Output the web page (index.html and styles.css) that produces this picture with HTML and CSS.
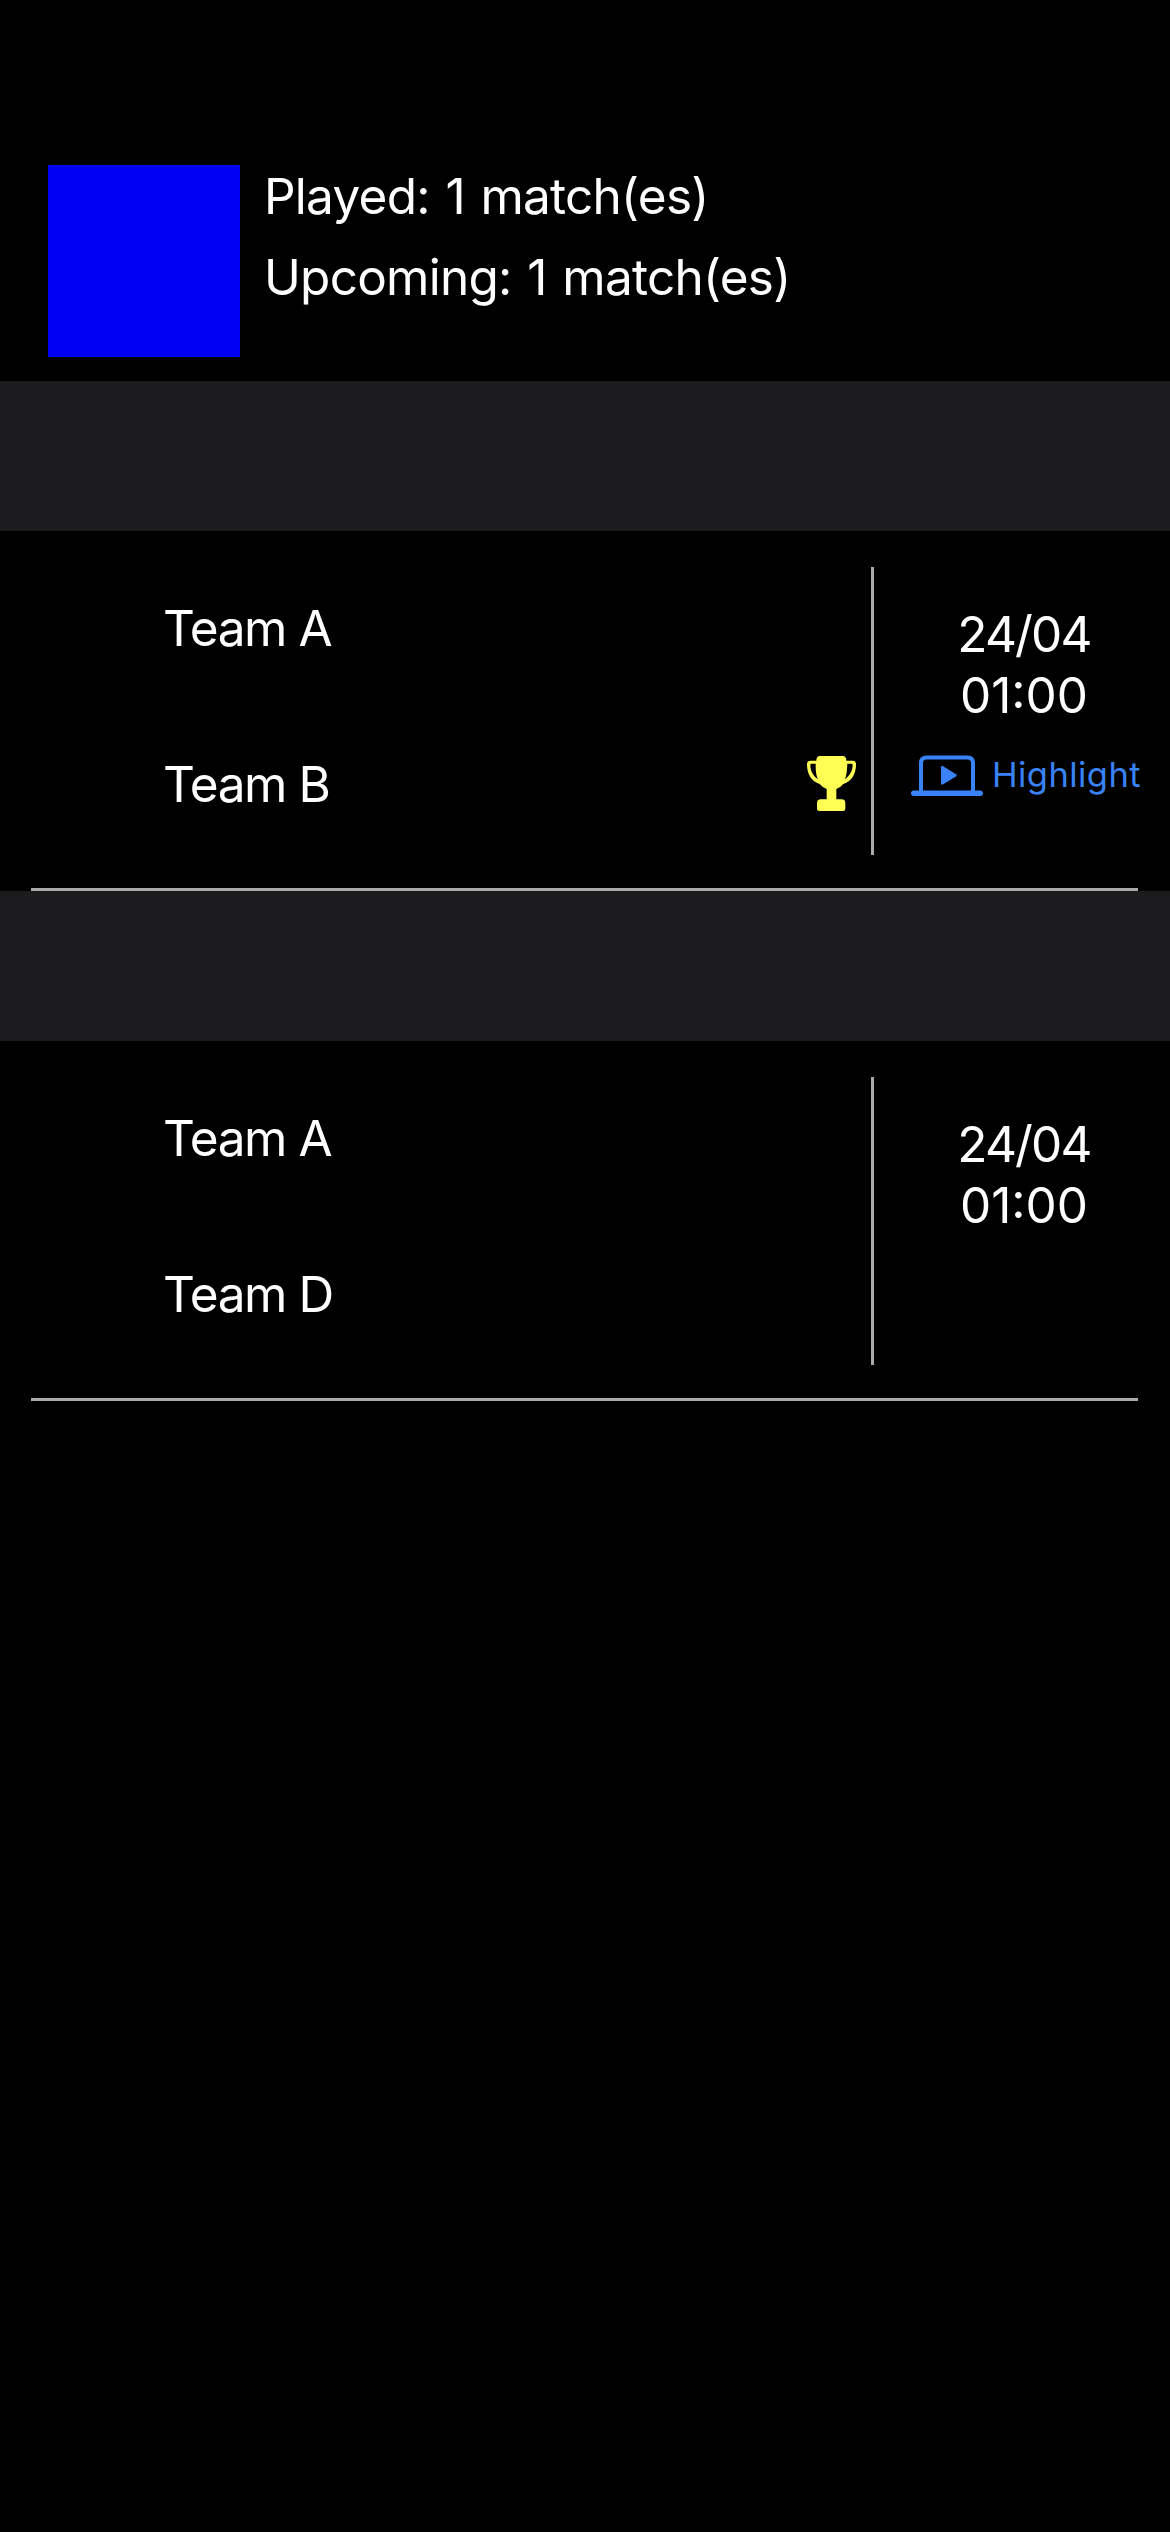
FILE: index.html
```html
<!DOCTYPE html>
<html lang="en">
<head>
<meta charset="utf-8">
<title>Matches</title>
<link rel="stylesheet" href="styles.css">
</head>
<body>
<header class="summary">
  <div class="badge"></div>
  <div class="counts">
    <p>Played: 1 match(es)</p>
    <p>Upcoming: 1 match(es)</p>
  </div>
</header>
<main>
  <section>
    <div class="section-header"></div>
    <article class="match">
      <div class="teams">
        <div class="team"><span>Team A</span></div>
        <div class="team"><span>Team B</span>
          <svg class="trophy" width="49" height="55" viewBox="51 78 147 165">
            <path fill="#ffff54" d="M90 78H158Q169 78 169 92H188Q198 92 198 103C198 133 184 155 160 162Q150 174 139 177V208H155Q166 208 166 220V236Q166 243 159 243H88Q81 243 81 236V220Q81 208 92 208H110V177Q99 174 89 162C65 155 51 133 51 103Q51 92 61 92H79Q79 78 90 78Z"/>
            <path fill="#000" d="M64 101H77C77 122 78 136 84 148C69 138 61 122 61 105Q61 101 64 101ZM172 101H184Q188 101 188 105C188 122 179 138 164 148C170 136 171 122 172 101Z"/>
          </svg>
        </div>
      </div>
      <div class="divider"></div>
      <div class="info">
        <p class="date">24/04</p>
        <p class="time">01:00</p>
        <a class="highlight">
          <svg class="laptop" width="72" height="42" viewBox="0 0 72 42">
            <path fill="none" stroke="#3a82f7" stroke-width="4" d="M10 36V8Q10 2.500 15.500 2.500H56.500Q62 2.500 62 8V36"/>
            <rect y="35.500" width="72" height="5.500" rx="2.750" fill="#3a82f7"/>
            <path fill="#3a82f7" d="M30 12.500Q30 10 32.200 11.300L45 19.200Q46.500 20.300 45 21.400L32.200 29.300Q30 30.500 30 28Z"/>
          </svg>
          <span>Highlight</span>
        </a>
      </div>
    </article>
  </section>
  <section>
    <div class="section-header"></div>
    <article class="match">
      <div class="teams">
        <div class="team"><span>Team A</span></div>
        <div class="team"><span>Team D</span></div>
      </div>
      <div class="divider"></div>
      <div class="info">
        <p class="date">24/04</p>
        <p class="time">01:00</p>
      </div>
    </article>
  </section>
</main>
</body>
</html>
```

FILE: styles.css
```css
* { box-sizing: border-box; }
body {
  margin: 0;
  min-height: 2532px;
  background: #000;
  color: #fff;
  font: 49.5px/61px Inter, "Liberation Sans", sans-serif;
}
p { margin: 0; white-space: nowrap; }
.summary {
  display: flex;
  gap: 24px;
  padding: 165px 48px 24px;
}
.badge { width: 192px; height: 192px; background: #0000f5; }
.counts {
  display: flex;
  flex-direction: column;
  gap: 20px;
  padding-top: 1px;
  letter-spacing: -0.75px;
  word-spacing: 2.5px;
}
.section-header { height: 150px; background: #1c1c1e; }
.match {
  display: grid;
  grid-template-columns: 871px 3px 1fr;
  height: 360px;
  background: linear-gradient(#aaa, #aaa) 31px 100% / 1107px 3px no-repeat;
}
.teams {
  display: flex;
  flex-direction: column;
  gap: 95px;
  padding: 67px 15px 0 163px;
}
.team {
  display: flex;
  justify-content: space-between;
  align-items: center;
  height: 61px;
  letter-spacing: -1.4px;
}
.trophy { display: block; margin-top: -2px; }
.divider { margin: 36px 0; background: #aaa; }
.info {
  display: flex;
  flex-direction: column;
  align-items: center;
  padding: 73px 0 0 4px;
}
.date { letter-spacing: -1.8px; }
.highlight {
  display: flex;
  gap: 9px;
  margin: 28px 0 0 4px;
  color: #3a82f7;
  font-size: 34.5px;
  line-height: 42px;
  letter-spacing: 0.45px;
}
.laptop { margin-top: 1px; }
```
